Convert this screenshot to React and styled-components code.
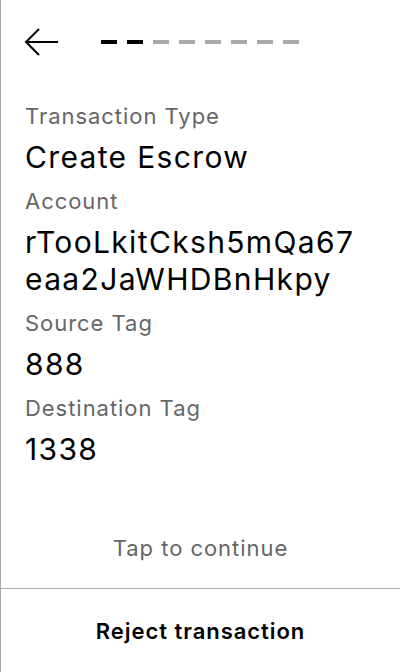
import React from 'react';
import styled, { createGlobalStyle } from 'styled-components';

const GlobalStyle = createGlobalStyle`
  html, body {
    margin: 0;
    padding: 0;
    background: #fff;
  }
  body {
    font-family: Inter, "Noto Sans", sans-serif;
    letter-spacing: 0.06em;
  }
`;

const Screen = styled.div`
  display: flex;
  flex-direction: column;
  height: 100vh;
  box-sizing: border-box;
  border-left: 1px solid #aaa;
  color: #000;
`;

const Header = styled.div`
  display: flex;
  align-items: center;
  gap: 42px;
  height: 36px;
  padding: 24px 0 0 23px;
`;

const BackButton = styled.button`
  display: flex;
  padding: 0;
  border: 0;
  background: none;
  cursor: pointer;
`;

const Steps = styled.div`
  display: flex;
  gap: 10px;
`;

const Step = styled.span`
  width: 16px;
  height: 4px;
  background: ${(p) => (p.$done ? '#000' : '#aaa')};
`;

const Details = styled.div`
  flex: 1;
  display: flex;
  flex-direction: column;
  gap: 11px;
  padding: 42px 38px 0 24px;
`;

const Field = styled.div`
  display: flex;
  flex-direction: column;
  gap: 9px;
`;

const Label = styled.div`
  font-size: 22px;
  line-height: 28px;
  color: #666;
`;

const Value = styled.div`
  font-size: 30px;
  line-height: 37px;
  letter-spacing: 0.045em;
  word-break: break-all;
`;

const Continue = styled.div`
  text-align: center;
  font-size: 22px;
  line-height: 28px;
  color: #666;
  padding-bottom: 26px;
`;

const Footer = styled.button`
  height: 84px;
  border: 0;
  border-top: 1px solid #aaa;
  background: none;
  font-family: inherit;
  letter-spacing: inherit;
  font-size: 22px;
  font-weight: 600;
  color: #000;
  cursor: pointer;
`;

const fields = [
  { label: 'Transaction Type', value: 'Create Escrow' },
  { label: 'Account', value: 'rTooLkitCksh5mQa67eaa2JaWHDBnHkpy' },
  { label: 'Source Tag', value: '888' },
  { label: 'Destination Tag', value: '1338' },
];

const ArrowLeft = () => (
  <svg width="35" height="30" viewBox="0 0 35 30" fill="none" stroke="#000" strokeWidth="2">
    <path d="M15 2 L2 15 L15 28 M2 15 H34" />
  </svg>
);

export default function App() {
  return (
    <>
      <GlobalStyle />
      <Screen>
        <Header>
          <BackButton aria-label="Back">
            <ArrowLeft />
          </BackButton>
          <Steps>
            {Array.from({ length: 8 }).map((_, i) => (
              <Step key={i} $done={i < 2} />
            ))}
          </Steps>
        </Header>
        <Details>
          {fields.map((f) => (
            <Field key={f.label}>
              <Label>{f.label}</Label>
              <Value>{f.value}</Value>
            </Field>
          ))}
        </Details>
        <Continue>Tap to continue</Continue>
        <Footer>Reject transaction</Footer>
      </Screen>
    </>
  );
}
